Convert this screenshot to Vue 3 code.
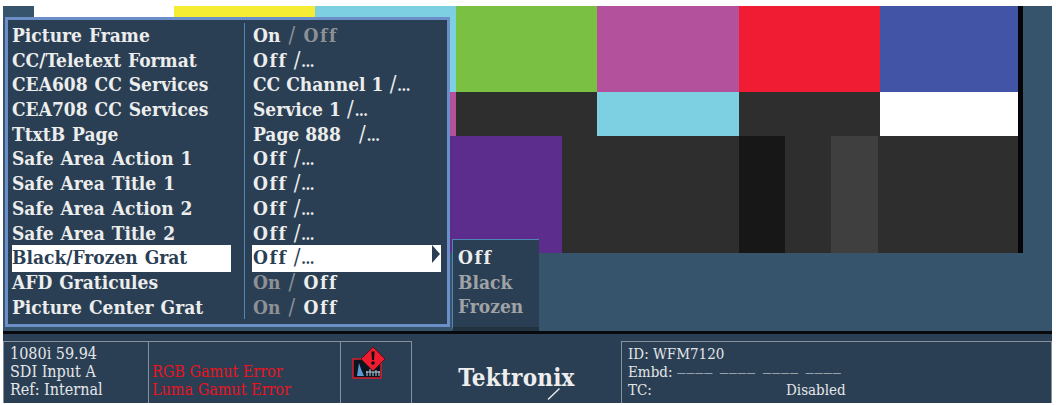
<script setup>
const topBars = ['#36546c', '#ffffff', '#f5ec33', '#7dd0e2', '#7ac143', '#b4519c', '#ef1c33', '#4254a5']
const midBars = ['#4254a5', '#2e2e2e', '#b4519c', '#2e2e2e', '#7dd0e2', '#2e2e2e', '#ffffff']

const menu = [
  { label: 'Picture Frame', on: 'On', off: 'Off', active: 'on' },
  { label: 'CC/Teletext Format', value: 'Off' },
  { label: 'CEA608 CC Services', value: 'CC Channel 1' },
  { label: 'CEA708 CC Services', value: 'Service 1' },
  { label: 'TtxtB Page', value: 'Page 888\u00a0\u00a0' },
  { label: 'Safe Area Action 1', value: 'Off' },
  { label: 'Safe Area Title 1', value: 'Off' },
  { label: 'Safe Area Action 2', value: 'Off' },
  { label: 'Safe Area Title 2', value: 'Off' },
  { label: 'Black/Frozen Grat', value: 'Off', selected: true },
  { label: 'AFD Graticules', on: 'On', off: 'Off', active: 'off' },
  { label: 'Picture Center Grat', on: 'On', off: 'Off', active: 'off' },
]

const submenu = [
  { label: 'Off', active: true },
  { label: 'Black' },
  { label: 'Frozen' },
]
</script>

<template>
  <div class="page">
    <div class="screen">
      <div class="video">
        <div class="pattern">
          <div class="bars top">
            <div v-for="(c, i) in topBars" :key="i" :style="{ background: c }"></div>
          </div>
          <div class="bars mid">
            <div v-for="(c, i) in midBars" :key="i" :style="{ background: c }"></div>
          </div>
          <div class="bars low">
            <div class="low-purple"></div>
            <div class="low-dark"></div>
            <div class="low-black"></div>
            <div class="low-dark2"></div>
            <div class="low-light"></div>
            <div class="low-dark3"></div>
          </div>
        </div>

        <div class="menu">
          <div class="menu-rows">
            <div v-for="row in menu" :key="row.label" class="row" :class="{ selected: row.selected }">
              <div class="row-label"><span>{{ row.label }}</span></div>
              <div class="row-value">
                <template v-if="row.on">
                  <span :class="{ dim: row.active !== 'on' }">{{ row.on }}</span>
                  <span class="dim slash gap"> / </span>
                  <span class="wide" :class="{ dim: row.active !== 'off' }">{{ row.off }}</span>
                </template>
                <template v-else>
                  <span :class="{ wide: row.value === 'Off' }">{{ row.value }}</span><span class="slash"> /</span><span class="more">...</span>
                </template>
                <i v-if="row.selected" class="arrow"></i>
              </div>
            </div>
          </div>
        </div>

        <div class="submenu">
          <div v-for="s in submenu" :key="s.label" class="sub-item" :class="{ dim: !s.active, wide: s.label === 'Off' }">{{ s.label }}</div>
        </div>
      </div>

      <div class="status">
        <div class="cell cell-input">
          <div>1080i 59.94</div>
          <div>SDI Input A</div>
          <div>Ref: Internal</div>
        </div>
        <div class="cell cell-errors">
          <div>RGB Gamut Error</div>
          <div>Luma Gamut Error</div>
        </div>
        <div class="cell cell-icon">
          <svg width="36" height="36" viewBox="0 0 36 36">
            <rect x="1" y="13" width="28" height="19" fill="#0c1420" stroke="#d81e2c" stroke-width="1.5" />
            <path d="M5 30 L7 17 L9 23 L12 30 Z" fill="#5b9bd5" />
            <path d="M15 30v-5M18 30v-7M21 30v-4M24 30v-6M27 30v-5M14 26h14" stroke="#b9cfe0" stroke-width="1" fill="none" />
            <path d="M21 1 L33 13 L21 25 L9 13 Z" fill="#ee1c2e" stroke="#5c1018" stroke-width="1" />
            <path d="M19.4 5.5 h3.2 l-.6 8.5 h-2 Z" fill="#111" />
            <circle cx="21" cy="17" r="1.8" fill="#111" />
          </svg>
        </div>
        <div class="logo">
          <span class="logo-text">Tektronix</span>
          <svg class="logo-slash" width="14" height="12" viewBox="0 0 14 12">
            <path d="M1 11.5 L12.5 0.5" stroke="#f0f0f0" stroke-width="1.3" fill="none" />
          </svg>
        </div>
        <div class="cell cell-id">
          <div>ID: WFM7120</div>
          <div class="embd">Embd: <span class="dashes">———— ———— ———— ————</span></div>
          <div class="tc"><span>TC:</span><span>Disabled</span></div>
        </div>
      </div>
    </div>
  </div>
</template>

<style scoped>
.page {
  width: 1056px;
  height: 405px;
  background: #fff;
  padding: 6px 4px 2px 3px;
  box-sizing: border-box;
  font-family: "DejaVu Serif", "Liberation Serif", serif;
  font-variant-ligatures: none;
  overflow: hidden;
}

.screen {
  height: 100%;
  display: flex;
  flex-direction: column;
}

.video {
  position: relative;
  height: 325px;
  background: #36546c;
  padding-right: 29px;
  box-sizing: border-box;
}

.pattern {
  height: 247px;
  display: flex;
  flex-direction: column;
  border-right: 5px solid #050505;
}

.bars { display: grid; }

.top {
  height: 86px;
  grid-template-columns: 31px 140px 141px 141px 141px 142px 141px 1fr;
}

.mid {
  height: 44px;
  margin-left: 31px;
  grid-template-columns: 140px 141px 141px 141px 142px 141px 1fr;
}

.low {
  height: 117px;
  margin-left: 31px;
  grid-template-columns: 528px 177px 46px 46px 47px 1fr;
}

.low-purple { background: #5c2d8d; }
.low-dark, .low-dark2, .low-dark3 { background: #2e2e2e; }
.low-black { background: #171717; }
.low-light { background: #3f3f3f; }

/* menu lies over the test pattern */
.menu {
  position: absolute;
  left: 2px;
  top: 11px;
  width: 445px;
  height: 310px;
  box-sizing: border-box;
  background: #2b3f54;
  border: 3px solid #6d8fc9;
  padding: 3px 0 0;
}

.menu-rows {
  display: flex;
  flex-direction: column;
}

.row {
  display: grid;
  grid-template-columns: 237px 1fr;
  height: 24.7px;
  font-size: 19px;
  font-weight: 700;
  font-stretch: condensed;
  line-height: 24.7px;
  color: #eceded;
  white-space: pre;
}

.row-label {
  padding-left: 4px;
  border-right: 1px solid #4f86b5;
  word-spacing: 1px;
}

.row-value {
  padding-left: 8px;
  position: relative;
  margin-right: 5px;
}

.selected .row-label {
  background: linear-gradient(#fff, #fff) 4px 0 / 219px 100% no-repeat;
  color: #2b3f54;
}

.selected .row-value {
  background: linear-gradient(#fff, #fff) 7px 0 / 189px 100% no-repeat;
  color: #2b3f54;
}

.dim { color: #8d9196; }
.wide { letter-spacing: 1.6px; }
.slash { font-weight: 400; font-size: 22px; }
.gap { margin: 0 2px; }
.more { font-size: 15px; letter-spacing: -0.5px; margin-left: 1px; }

.arrow {
  position: absolute;
  right: 2px;
  top: 0;
  width: 0;
  height: 0;
  border-left: 8px solid #2b3f54;
  border-top: 9px solid transparent;
  border-bottom: 9px solid transparent;
}

.submenu {
  position: absolute;
  left: 449px;
  top: 233px;
  width: 87px;
  height: 92px;
  box-sizing: border-box;
  background: #2b3f54;
  border-top: 1px solid #4f86b5;
  border-left: 1px solid #4f86b5;
  border-bottom: 4px solid #22323f;
  padding: 5px 0 0 5px;
  font-size: 19px;
  font-weight: 700;
  font-stretch: condensed;
  line-height: 24.7px;
  color: #eceded;
}

.sub-item.dim { color: #a0a3a6; }

.status {
  flex: 1;
  display: flex;
  align-items: flex-end;
  background: #2b3f54;
  border-top: 3px solid #07090c;
  font-size: 16px;
  color: #e4e6e8;
  font-stretch: condensed;
  line-height: 18px;
}

.cell {
  height: 62px;
  box-sizing: border-box;
  border: 1.5px solid #87919b;
  border-bottom: 0;
  flex: none;
}

.cell-input {
  width: 146px;
  padding: 3px 0 0 6px;
}

.cell-errors {
  width: 192px;
  border-left: 0;
  padding: 21px 0 0 3px;
  color: #e8141f;
}

.cell-icon {
  width: 71px;
  border-left: 0;
  padding: 4px 0 0 11px;
}

.logo {
  width: 209px;
  height: 62px;
  position: relative;
  display: flex;
  align-items: flex-start;
  justify-content: center;
  flex: none;
}

.logo-text {
  margin-top: 28px;
  font-size: 24px;
  font-weight: 700;
  letter-spacing: 0.2px;
  color: #eeeeee;
}

.logo-slash {
  position: absolute;
  left: 135px;
  top: 47px;
}

.cell-id {
  flex: 1;
  padding: 3px 0 0 6px;
  border-right-width: 1px;
  font-size: 15px;
}

.embd { height: 18px; }

.dashes {
  font-size: 10px;
  word-spacing: 4px;
  line-height: 1;
  vertical-align: 1px;
}

.tc {
  display: grid;
  grid-template-columns: 158px 1fr;
}
</style>
